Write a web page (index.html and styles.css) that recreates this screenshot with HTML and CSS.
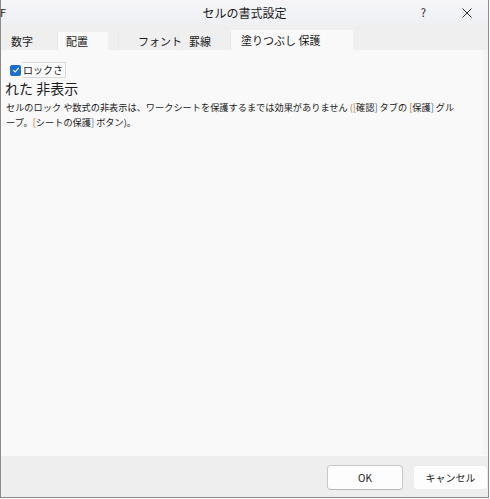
FILE: index.html
```html
<!DOCTYPE html>
<html lang="ja">
<head>
<meta charset="utf-8">
<title>セルの書式設定</title>
<link rel="stylesheet" href="styles.css">
</head>
<body>
<div class="dialog">
  <header class="titlebar">
    <span class="app-letter">F</span>
    <span class="title">セルの書式設定</span>
    <div class="title-actions">
      <span class="help">?</span>
      <svg class="close" width="10" height="10" viewBox="0 0 10 10" aria-hidden="true">
        <path d="M0.5 0.5 L9.5 9.5 M9.5 0.5 L0.5 9.5" stroke="#333" stroke-width="1" fill="none"/>
      </svg>
    </div>
  </header>

  <nav class="tabs">
    <span class="tab tab-number">数字</span>
    <span class="tab tab-align">配置</span>
    <span class="tab tab-font">フォント</span>
    <span class="tab tab-border">罫線</span>
    <span class="tab tab-protect">塗りつぶし 保護</span>
  </nav>

  <main class="panel">
    <div class="check-row">
      <span class="checkbox">
        <svg width="8" height="8" viewBox="0 0 8 8" aria-hidden="true">
          <path d="M1.2 4.2 L3.2 6 L6.8 1.8" stroke="#fff" stroke-width="1.1" fill="none"/>
        </svg>
      </span>
      <span class="check-label">ロックさ</span>
    </div>
    <div class="hidden-label">れた 非表示</div>
    <p class="note">セルのロック や数式の非表示は、ワークシートを保護するまでは効果がありません <span class="paren">(</span><span class="br-l">[</span>確認<span class="br-r">]</span> タブの <span class="br-l">[</span>保護<span class="br-r">]</span> グループ。<span class="br-l">[</span>シートの保護<span class="br-r">]</span> ボタン)。</p>
  </main>

  <footer class="footer">
    <button class="btn btn-ok">OK</button>
    <button class="btn btn-cancel">キャンセル</button>
  </footer>
</div>
</body>
</html>
```

FILE: styles.css
```css
* {
  box-sizing: border-box;
}

html, body {
  margin: 0;
  padding: 0;
  background: #ffffff;
}

body {
  font-family: "Noto Sans CJK JP", "Noto Sans", sans-serif;
  color: #1a1a1a;
}

.dialog {
  width: 489px;
  height: 498px;
  border: 1px solid #8a8a8a;
  border-top: none;
  display: flex;
  flex-direction: column;
  background: #f9f9f9;
}

/* title bar */
.titlebar {
  height: 25px;
  display: flex;
  align-items: center;
  position: relative;
  background: linear-gradient(#f6f6f8, #eef0f5);
}

.app-letter {
  font-size: 11px;
  margin-left: -1px;
  line-height: 1;
}

.title {
  position: absolute;
  left: 0;
  right: 0;
  text-align: center;
  font-size: 12px;
  line-height: 1;
  pointer-events: none;
}

.title-actions {
  margin-left: auto;
  display: flex;
  align-items: center;
  gap: 36px;
  margin-right: 16px;
}

.help {
  font-size: 11px;
  line-height: 1;
}

/* tab strip */
.tabs {
  height: 25px;
  display: flex;
  align-items: flex-end;
  background: #efefef;
  font-size: 11px;
  white-space: nowrap;
}

.tab {
  height: 18px;
  display: flex;
  align-items: center;
  line-height: 1;
  border-right: 1px solid #e8e8e8;
  flex: none;
}

.tab-number { width: 57px; padding-left: 10px; }
.tab-align  { width: 61px; padding-left: 8px; background: linear-gradient(90deg, #f9f9f9 0, #f9f9f9 50px, #efefef 50px); }
.tab-font   { width: 60px; padding-left: 19px; }
.tab-border { width: 52px; padding-left: 10px; }
.tab-protect {
  width: 122px;
  padding-left: 10px;
  height: 20px;
  background: #f9f9f9;
  border-right: none;
}

/* content */
.panel {
  flex: 1;
  padding: 12px 0 0 4px;
  background: #f9f9f9;
  border-right: 5px solid #f4f4f4;
}

.check-row {
  display: flex;
  align-items: center;
  height: 16px;
  padding-left: 5px;
}

.checkbox {
  width: 11px;
  height: 11px;
  border-radius: 2px;
  background: #1e6fc7;
  display: flex;
  align-items: center;
  justify-content: center;
}

.check-label {
  font-size: 10px;
  line-height: 14px;
  margin-left: 1px;
  padding: 0 2px 0 1px;
  border: 1px solid #d8d8d8;
  border-left: none;
  background: #fbfbfb;
}

.hidden-label {
  font-size: 14px;
  line-height: 18px;
  margin-top: 1px;
}

.note {
  margin: 3px 0 0 1px;
  width: 456px;
  font-size: 9.2px;
  line-height: 15px;
}

.paren { color: #9a7a50; }
.br-l  { color: #c86a10; }
.br-r  { color: #3a68c0; }

/* footer */
.footer {
  height: 42px;
  border-top: 1px solid #fafafa;
  background: #eeeeee;
  display: flex;
  justify-content: flex-end;
  align-items: center;
  gap: 10px;
  padding-top: 1px;
}

.btn {
  font-family: inherit;
  font-size: 10px;
  height: 25px;
  border-radius: 4px;
  color: #1a1a1a;
  padding: 0;
}

.btn-ok {
  width: 76px;
  background: #fdfdfd;
  border: 1px solid #c8c8c8;
  border-bottom-color: #b8b8b8;
}

.btn-cancel {
  width: 75px;
  background: #fdfdfd;
  border: 1px solid #ececec;
}
```
